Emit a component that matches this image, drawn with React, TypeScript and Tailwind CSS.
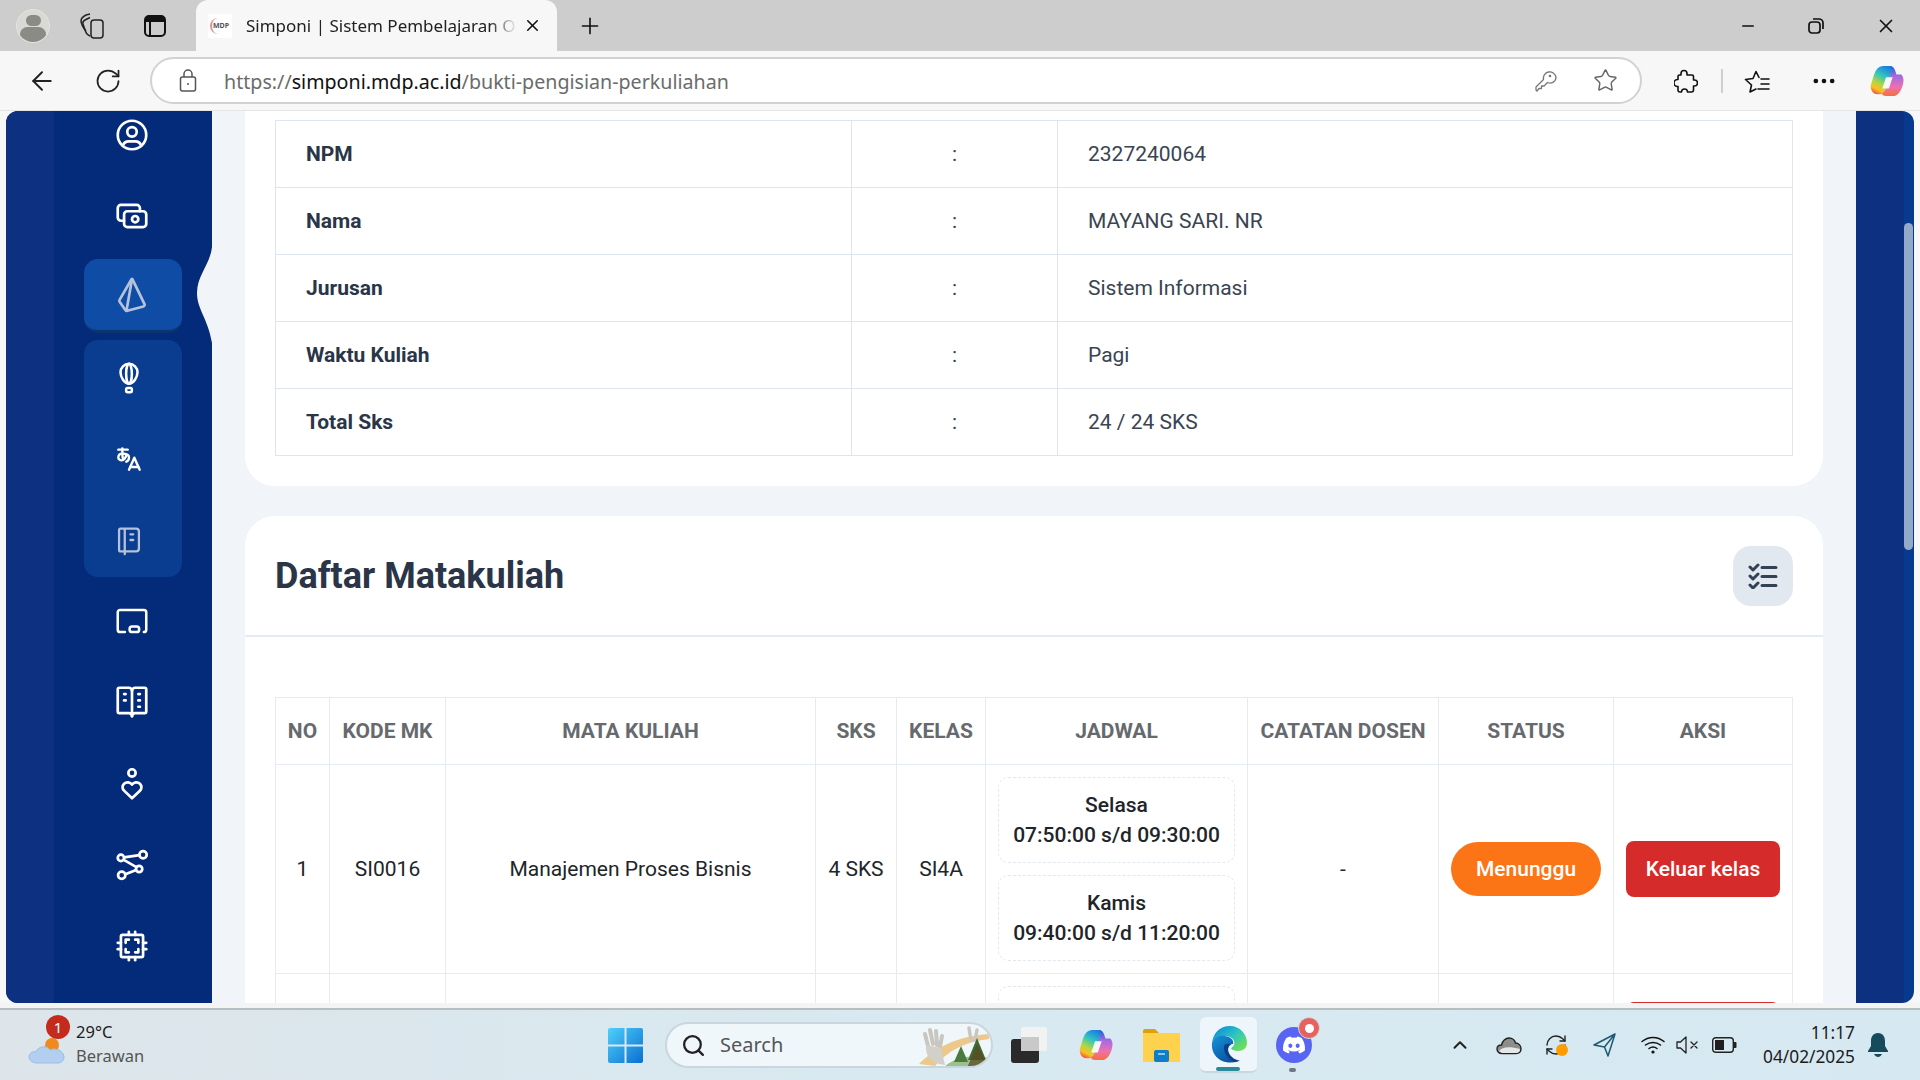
import { ArrowLeft, RotateCw, RefreshCw, Plus, X, Minus, ChevronUp, Search, Star, Ellipsis } from "lucide-react";
import { FaDiscord } from "react-icons/fa";
import {
  TbUserCircle,
  TbCash,
  TbBrandPrisma,
  TbAirBalloon,
  TbLanguageHiragana,
  TbNotebook,
  TbVocabulary,
  TbCpu2,
} from "react-icons/tb";

const biodata = [
  { label: "NPM", value: "2327240064" },
  { label: "Nama", value: "MAYANG SARI. NR" },
  { label: "Jurusan", value: "Sistem Informasi" },
  { label: "Waktu Kuliah", value: "Pagi" },
  { label: "Total Sks", value: "24 / 24 SKS" },
];

const headers = ["NO", "KODE MK", "MATA KULIAH", "SKS", "KELAS", "JADWAL", "CATATAN DOSEN", "STATUS", "AKSI"];

function CopilotLogo({ size, id }: { size: number; id: string }) {
  return (
    <svg width={size} height={size} viewBox="0 0 36 36">
      <defs>
        <linearGradient id={`${id}-a`} x1="0.7" y1="0" x2="0.3" y2="1">
          <stop offset="0" stopColor="#1b7fe0" />
          <stop offset="0.35" stopColor="#30c5c0" />
          <stop offset="0.65" stopColor="#b6d63c" />
          <stop offset="0.85" stopColor="#fbbf24" />
          <stop offset="1" stopColor="#f0603a" />
        </linearGradient>
        <linearGradient id={`${id}-b`} x1="0.5" y1="0" x2="0.5" y2="1">
          <stop offset="0" stopColor="#1560d8" />
          <stop offset="0.35" stopColor="#a66be0" />
          <stop offset="0.7" stopColor="#ee6fb0" />
          <stop offset="1" stopColor="#f4703a" />
        </linearGradient>
      </defs>
      <path d="M14 2 L21 2 C23 2 24 3 23.5 5 L18 25 C17 29 15 32 11 32 L8 32 C3 32 0 27 1 22 L4 12 C6 6 9 2 14 2Z" fill={`url(#${id}-a)`} />
      <path d="M21 2 C24 2 26 4 27 8 L28 11 L33 11 C36 14 36 18 34.5 23 C33 28 30 34 24 34 L17 34 C14 34 12.5 32.5 13 31 C15 30 16.5 28 17.5 25 L22 9 C23 6 23 4 21 2Z" fill={`url(#${id}-b)`} />
      <path d="M17 14 L24 14 L20 26 L13 26Z" fill="#ffffff" opacity="0.92" />
    </svg>
  );
}

function EdgeLogo() {
  return (
    <svg width="38" height="38" viewBox="0 0 38 38">
      <defs>
        <linearGradient id="edge-a" x1="0.2" y1="0" x2="1" y2="0.7">
          <stop offset="0" stopColor="#0c8fd6" />
          <stop offset="0.55" stopColor="#2fc6c0" />
          <stop offset="1" stopColor="#6ade5a" />
        </linearGradient>
        <linearGradient id="edge-b" x1="0" y1="0" x2="0.7" y2="1">
          <stop offset="0" stopColor="#1593d8" />
          <stop offset="1" stopColor="#0b4f9e" />
        </linearGradient>
      </defs>
      <path d="M2 18 C3 8 10 1 20 1 C30 1 37 9 37 18 C37 23 33 26 28 26 C24 26 21 25 21 23 C24 21 25 19 24 16 C22 11 15 10 9 12 C5 13 3 15 2 18Z" fill="url(#edge-a)" />
      <path d="M2 18 C4 12 10 10 15 11 C21 12 24 15 23 19 C19 20 17 24 19 29 C21 33 25 36 29 36 C26 37 23 37.5 20 37.5 C9 37.5 1 29 2 18Z" fill="url(#edge-b)" />
      <path d="M19 29 C17 24 19 20 23 19 C23 21 22 22 21 23 C21 25 24 26 28 26 C31 26 33 27 34 27 C32 32 29 35 26 36 C23 35 20 32 19 29Z" fill="#eef6fb" />
      <path d="M14 21 C13 28 18 34 25 37 C26 37 28 36 30 35.5 C24 35 20 31 18.5 27 C17.5 24 18 21 20 19 C17 18.5 15 19 14 21Z" fill="#0a3f86" />
    </svg>
  );
}

function SearchArt() {
  return (
    <svg width="74" height="44" viewBox="0 0 74 44">
      <path d="M2 40 C18 24 40 12 72 10 L72 15 C46 18 30 28 18 42Z" fill="#ecc98a" />
      <path d="M8 10 L11 22 M13 6 L16 20 M19 7 L20 21 M25 12 L23 23" stroke="#c9c6c0" strokeWidth="4" strokeLinecap="round" />
      <path d="M9 21 C8 32 14 40 28 41 L24 24Z" fill="#d3d0ca" />
      <path d="M52 4 L54 16 M60 6 L58 16" stroke="#c9c6c0" strokeWidth="3.5" strokeLinecap="round" />
      <path d="M26 44 C36 34 52 30 72 34 L68 44Z" fill="#9dc08f" />
      <path d="M60 14 L69 36 L51 36Z" fill="#3f6b35" />
      <path d="M44 22 L51 38 L37 38Z" fill="#4b7a3e" />
      <path d="M60 20 L72 44 L50 44Z" fill="#5a4a20" opacity="0.75" />
    </svg>
  );
}

function Sidebar() {
  const slot = "h-[32px] flex items-center justify-center";
  const icon = "w-[38px] h-[38px] shrink-0 text-white";
  const sub = "h-[81px] shrink-0 flex items-center justify-center pr-[8px]";
  return (
    <aside className="relative w-[206px] ml-[6px] flex rounded-tl-[12px] rounded-bl-[12px] overflow-hidden bg-[#042a7a]">
      <div className="w-[48px] bg-[#0d3080]" />
      <nav className="flex-1 flex flex-col items-center pr-[3px]">
        <div className={`mt-[8px] ${slot}`}><TbUserCircle className={icon} strokeWidth={1.7} /></div>
        <div className={`mt-[49px] ${slot}`}><TbCash className={icon} strokeWidth={1.7} /></div>
        <div className="mt-[27px] ml-[2px] pr-[2px] w-[98px] h-[74px] rounded-[14px] bg-[#0e4ca6] border-b-[3px] border-[#0a3570] flex items-center justify-center">
          <TbBrandPrisma className="w-[38px] h-[38px] text-[#b4c2dc]" strokeWidth={1.7} />
        </div>
        <div className="mt-[7px] ml-[2px] w-[98px] h-[237px] rounded-[14px] bg-[#0a3c8f] flex flex-col overflow-hidden">
          <div className={`${sub} -mt-[3px]`}><TbAirBalloon className="w-[34px] h-[34px] text-white" strokeWidth={1.8} /></div>
          <div className={sub}><TbLanguageHiragana className="w-[32px] h-[32px] text-white" strokeWidth={1.8} /></div>
          <div className={sub}><TbNotebook className="w-[34px] h-[34px] text-[#b4c2dc]" strokeWidth={1.6} /></div>
        </div>
        <div className={`mt-[28px] ${slot}`}>
          <svg className={icon} viewBox="0 0 24 24" fill="none" stroke="currentColor" strokeWidth="1.600" strokeLinecap="round" strokeLinejoin="round">
            <path d="M7.500 19H4.500a1.500 1.500 0 0 1-1.500-1.500V6.500A1.500 1.500 0 0 1 4.500 5h15A1.500 1.500 0 0 1 21 6.500v11a1.500 1.500 0 0 1-1.500 1.500" />
            <rect x="10.500" y="15.500" width="6" height="3.500" rx="1.500" />
          </svg>
        </div>
        <div className={`mt-[49px] ${slot}`}><TbVocabulary className={icon} strokeWidth={1.7} /></div>
        <div className={`mt-[50px] ${slot}`}>
          <svg className={icon} viewBox="0 0 24 24" fill="none" stroke="currentColor" strokeWidth="1.700" strokeLinecap="round" strokeLinejoin="round">
            <circle cx="12" cy="5" r="2.300" />
            <path d="M12 21 L7 16.200 a3 3 0 0 1 0-4.400 a3.300 3.300 0 0 1 5 .6 a3.300 3.300 0 0 1 5-.6 a3 3 0 0 1 0 4.400Z" />
          </svg>
        </div>
        <div className={`mt-[49px] ${slot}`}>
          <svg className={icon} viewBox="0 0 24 24" fill="none" stroke="currentColor" strokeWidth="1.700" strokeLinecap="round" strokeLinejoin="round">
            <circle cx="5" cy="7.500" r="2" />
            <circle cx="19" cy="5.500" r="2.300" />
            <circle cx="5.500" cy="18.500" r="2.300" />
            <circle cx="16.500" cy="14.500" r="2" />
            <path d="M6.800 8.800 L14.800 13.300 M7.800 17.800 L14.600 15.200 M7 7.200 L16.700 5.800" />
          </svg>
        </div>
        <div className={`mt-[49px] ${slot}`}><TbCpu2 className={icon} strokeWidth={1.7} /></div>
      </nav>
      <svg className="absolute right-0 top-[136px]" width="15" height="96" viewBox="0 0 15 96">
        <path d="M15 0 C13 18 0 28 0 46 C0 62 11 72 15 96 Z" fill="#f1f5f9" />
      </svg>
    </aside>
  );
}

function Biodata() {
  return (
    <section className="bg-white rounded-b-[30px] px-[30px] pt-[9px] pb-[30px]">
      <table className="w-full table-fixed border-collapse text-[21px]">
        <colgroup>
          <col className="w-[576px]" />
          <col className="w-[206px]" />
          <col />
        </colgroup>
        <tbody>
          {biodata.map((row) => (
            <tr key={row.label} className="h-[67px]">
              <td className="border border-[#dfe5ef] pl-[30px] pt-[2px] font-bold text-[#2a3547]">{row.label}</td>
              <td className="border border-[#dfe5ef] pt-[2px] text-center text-[#3a4452]">:</td>
              <td className="border border-[#dfe5ef] pl-[30px] pt-[2px] text-[#3a4452]">{row.value}</td>
            </tr>
          ))}
        </tbody>
      </table>
    </section>
  );
}

function Schedule({ day, time }: { day: string; time: string }) {
  return (
    <div className="h-[86px] rounded-[10px] border border-dashed border-[#e2e8f0] flex flex-col items-center justify-center text-[21px] leading-[30px] font-medium text-[#212529]">
      <div>{day}</div>
      <div>{time}</div>
    </div>
  );
}

function CourseList() {
  const cell = "border border-[#e6ebf3] text-center";
  const textCell = "border border-[#e6ebf3] text-center pt-[2px]";
  return (
    <section className="mt-[30px] bg-white rounded-t-[30px]">
      <div className="h-[121px] flex items-center justify-between px-[30px] border-b-2 border-[#e6ebf3]">
        <h2 className="text-[36px] font-bold text-[#2a3547]">Daftar Matakuliah</h2>
        <button className="w-[60px] h-[60px] rounded-[18px] bg-[#e2e8f0] flex items-center justify-center">
          <svg width="30" height="26" viewBox="0 0 30 26" fill="none" stroke="#334155" strokeLinecap="round" strokeLinejoin="round">
            <path d="M2 4l3 3 5-5M2 13l3 3 5-5M2 22l3 3 5-5" strokeWidth="3" />
            <path d="M14 4.500h14M14 13.500h14M14 22.500h14" strokeWidth="3" />
          </svg>
        </button>
      </div>
      <div className="px-[30px] pt-[60px]">
        <table className="w-full table-fixed border-collapse text-[21px] text-[#212529]">
          <colgroup>
            <col className="w-[54px]" />
            <col className="w-[116px]" />
            <col className="w-[370px]" />
            <col className="w-[81px]" />
            <col className="w-[89px]" />
            <col className="w-[262px]" />
            <col className="w-[191px]" />
            <col className="w-[175px]" />
            <col />
          </colgroup>
          <thead>
            <tr className="h-[67px]">
              {headers.map((h) => (
                <th key={h} className={`${textCell} font-bold text-[#666a6e]`}>{h}</th>
              ))}
            </tr>
          </thead>
          <tbody>
            <tr className="h-[209px]">
              <td className={textCell}>1</td>
              <td className={textCell}>SI0016</td>
              <td className={textCell}>Manajemen Proses Bisnis</td>
              <td className={textCell}>4 SKS</td>
              <td className={textCell}>SI4A</td>
              <td className={`${cell} px-[12px]`}>
                <div className="flex flex-col gap-[12px]">
                  <Schedule day="Selasa" time="07:50:00 s/d 09:30:00" />
                  <Schedule day="Kamis" time="09:40:00 s/d 11:20:00" />
                </div>
              </td>
              <td className={textCell}>-</td>
              <td className={cell}>
                <span className="inline-flex w-[150px] h-[54px] pt-[2px] items-center justify-center rounded-full bg-[#fb7517] text-white font-medium">Menunggu</span>
              </td>
              <td className={cell}>
                <button className="w-[154px] h-[56px] pt-[2px] rounded-[8px] bg-[#d62b2b] text-white font-medium">Keluar kelas</button>
              </td>
            </tr>
            <tr className="h-[208px] align-top">
              <td className={cell} />
              <td className={cell} />
              <td className={cell} />
              <td className={cell} />
              <td className={cell} />
              <td className={`${cell} px-[12px] pt-[12px]`}>
                <div className="h-[86px] rounded-[10px] border border-dashed border-[#e2e8f0]" />
              </td>
              <td className={cell} />
              <td className={cell} />
              <td className={cell}>
                <div className="mt-[28px] mx-auto w-[154px] h-[56px] rounded-[8px] bg-[#d62b2b]" />
              </td>
            </tr>
          </tbody>
        </table>
      </div>
    </section>
  );
}

function Taskbar() {
  return (
    <footer className="h-[70px] flex items-center bg-gradient-to-r from-[#dde5ea] via-[#d8e9f1] to-[#d6e8f1] text-[#1c1c1c]" style={{ fontFamily: '"Noto Sans", sans-serif' }}>
      <div className="relative ml-[28px] w-[38px] h-[44px]">
        <svg className="absolute left-0 bottom-[2px]" width="38" height="28" viewBox="0 0 38 28">
          <circle cx="24" cy="8" r="7" fill="#f08a1d" />
          <path d="M9 26 C3 26 1 22 1 20 C1 16 5 14 8 15 C10 9 19 8 22 13 C27 10 36 14 36 20 C36 24 33 26 30 26Z" fill="#b3cff0" stroke="#9bbce6" />
        </svg>
        <div className="absolute left-[18px] top-[-8px] w-[24px] h-[24px] rounded-full bg-[#c42b1c] text-white text-[15px] leading-[24px] text-center">1</div>
      </div>
      <div className="ml-[10px] -mt-[2px] w-[90px] leading-[24px] text-[16.500px]">
        <div>29°C</div>
        <div className="text-[#555]">Berawan</div>
      </div>
      <svg className="ml-[442px]" width="35" height="35" viewBox="0 0 35 35">
        <defs>
          <linearGradient id="win" x1="0" y1="0" x2="1" y2="1">
            <stop offset="0" stopColor="#4fd0fb" />
            <stop offset="1" stopColor="#0a6fd0" />
          </linearGradient>
        </defs>
        <path d="M0 2a2 2 0 0 1 2-2h14.500v16.500H0zM18.500 0H33a2 2 0 0 1 2 2v14.500H18.500zM0 18.500h16.500V35H2a2 2 0 0 1-2-2zM18.500 18.500H35V33a2 2 0 0 1-2 2H18.500z" fill="url(#win)" />
      </svg>
      <div className="relative ml-[22px] w-[328px] h-[46px] rounded-full bg-[#f0f7fb] border-2 border-[#c9d6dd] flex items-center overflow-hidden">
        <Search className="ml-[14px] w-[25px] h-[25px] text-[#222]" strokeWidth={2.2} />
        <span className="ml-[14px] text-[20px] text-[#555]">Search</span>
        <div className="absolute right-0 top-0"><SearchArt /></div>
      </div>
      <div className="relative ml-[18px] w-[36px] h-[36px]">
        <div className="absolute left-[10px] top-0 w-[26px] h-[24px] rounded-[2px] bg-[#f2f2f2]" />
        <div className="absolute left-0 bottom-0 w-[28px] h-[24px] rounded-[3px] bg-[#2a2a2a]" />
        <div className="absolute left-[10px] top-[10px] w-[18px] h-[14px] bg-[#c9c9c9]" />
      </div>
      <div className="ml-[32px]"><CopilotLogo size={34} id="task-copilot" /></div>
      <svg className="ml-[30px]" width="37" height="34" viewBox="0 0 37 34">
        <path d="M0 3a2 2 0 0 1 2-2h10l4 4h-16z" fill="#e0a00e" />
        <path d="M0 5h37v29H0z" fill="#ffd24d" />
        <rect x="11" y="22" width="15" height="12" rx="2" fill="#0f7dc7" />
        <path d="M15 26h7" stroke="#8cc7ee" strokeWidth="2" />
      </svg>
      <div className="relative ml-[20px] w-[57px] h-[56px] rounded-[6px] bg-[#eef6fb] border-b-2 border-[#c9d8e0] flex items-center justify-center">
        <EdgeLogo />
        <div className="absolute left-[16px] bottom-[0px] w-[24px] h-[4px] rounded-full bg-[#2a8a9a]" />
      </div>
      <div className="relative ml-[19px] w-[36px] h-[36px] rounded-full bg-[#5865f2] flex items-center justify-center">
        <FaDiscord className="w-[24px] h-[24px] text-white" />
        <div className="absolute right-[-8px] top-[-10px] w-[22px] h-[22px] rounded-full bg-[#e9605c] border-[1px] border-[#c9d8e0] flex items-center justify-center">
          <div className="w-[9px] h-[9px] rounded-full bg-white" />
        </div>
        <div className="absolute left-[13px] bottom-[-9px] w-[7px] h-[4px] rounded-full bg-[#6e7a80]" />
      </div>
      <ChevronUp className="ml-[137px] w-[22px] h-[22px] text-[#222]" strokeWidth={2.2} />
      <svg className="ml-[25px]" width="26" height="20" viewBox="0 0 26 20">
        <path d="M6 18.500C3 18.500 1 16.500 1 14C1 11.500 3 10 5.500 10C6.500 5.500 10 3 13 3C16.500 3 19 5.500 19.500 8C22.500 8 25 10.500 25 13.500C25 16.500 23 18.500 20 18.500Z" fill="#8d8d8d" stroke="#222" strokeWidth="1.4" />
        <path d="M3 16C6 12 13 11 24 14C24 17 22 18 20 18H6Z" fill="#e7e7e7" />
      </svg>
      <div className="relative ml-[22px] w-[24px] h-[24px]">
        <RefreshCw className="w-[24px] h-[24px] text-[#222]" strokeWidth={1.4} />
        <div className="absolute left-[12px] top-[11px] w-[12px] h-[12px] rounded-full bg-[#ff9d00]" />
      </div>
      <svg className="ml-[25px]" width="24" height="24" viewBox="0 0 24 24" fill="none" stroke="#1d5a72" strokeWidth="1.5" strokeLinejoin="round">
        <path d="M22 1 L1 12 L11.500 14 L15 23Z M11.500 14 L22 1" />
      </svg>
      <svg className="ml-[24px]" width="24" height="20" viewBox="0 0 24 20" fill="none" stroke="#111" strokeWidth="1.5" strokeLinecap="round">
        <path d="M1 6.500C7.500 1 16.500 1 23 6.500M4.500 10C9 6.500 15 6.500 19.500 10M8 13.500C10.500 11.500 13.500 11.500 16 13.500" />
        <circle cx="12" cy="17" r="1.6" fill="#111" stroke="none" />
      </svg>
      <svg className="ml-[11px]" width="24" height="20" viewBox="0 0 24 20" fill="none" stroke="#222" strokeWidth="1.3" strokeLinejoin="round" strokeLinecap="round">
        <path d="M1 7h3.500L10 2v16l-5.500-5H1z M15 7l6 6M21 7l-6 6" />
      </svg>
      <svg className="ml-[12px]" width="25" height="16" viewBox="0 0 25 16">
        <rect x="0.700" y="0.700" width="20.600" height="14.600" rx="3" fill="none" stroke="#222" strokeWidth="1.4" />
        <rect x="3" y="3" width="9" height="10" fill="#1f1f1f" />
        <path d="M22 5h1.500a1 1 0 0 1 1 1v4a1 1 0 0 1-1 1H22z" fill="#222" />
      </svg>
      <div className="ml-auto mr-[13px] text-right leading-[24px] text-[17.300px]">
        <div>11:17</div>
        <div>04/02/2025</div>
      </div>
      <svg className="mr-[32px]" width="20" height="24" viewBox="0 0 20 24" fill="#164b5e">
        <path d="M10 0C5 0 3 4 3 8V13L0 18V19H20V18L17 13V8C17 4 15 0 10 0Z" />
        <path d="M6 21H14C13 23 11.500 24 10 24C8.500 24 7 23 6 21Z" />
      </svg>
    </footer>
  );
}

export default function App() {
  return (
    <div className="w-[1920px] h-[1080px] overflow-hidden flex flex-col bg-[#f7f7f7]" style={{ fontFamily: "Roboto, sans-serif" }}>
      {/* tab strip */}
      <header className="h-[51px] shrink-0 bg-[#cdcdcd] flex items-center text-[#1c1c1c]" style={{ fontFamily: '"Noto Sans", sans-serif' }}>
        <div className="ml-[16px] w-[34px] h-[34px] rounded-full bg-[#d9d9d6] border border-[#e4e4e0] overflow-hidden flex flex-col items-center">
          <div className="mt-[5px] w-[15px] h-[16px] rounded-full bg-[#8b8b86]" />
          <div className="mt-[1px] w-[26px] h-[20px] rounded-full bg-[#8b8b86]" />
        </div>
        <svg className="ml-[30px]" width="24" height="26" viewBox="0 0 24 26" fill="none" stroke="#222" strokeWidth="1.5" strokeLinejoin="round">
          <rect x="11" y="7" width="12" height="18" rx="3" />
          <path d="M10 23C7 22 6 20 5 17L3 11C2.500 9 3 8 5 7L10 4.500" />
          <path d="M6 18C3 15 1 10 1 8C1 5 4 3 6 2L10 1" />
        </svg>
        <svg className="ml-[40px]" width="22" height="22" viewBox="0 0 22 22" fill="none">
          <rect x="1" y="1" width="20" height="20" rx="4" stroke="#111" strokeWidth="2" />
          <path d="M1 5a4 4 0 0 1 4-4h12a4 4 0 0 1 4 4v2H1z" fill="#111" />
          <path d="M6 7v14" stroke="#111" strokeWidth="2" />
        </svg>
        <div className="ml-[30px] w-[361px] h-[51px] rounded-t-[12px] bg-[#f7f7f7] flex items-center">
          <div className="ml-[12px] w-[24px] h-[24px] bg-white flex items-center justify-center">
            <div className="w-[20px] h-[16px] rounded-full border-l-2 border-[#e58f8f] text-[7px] leading-[16px] font-bold text-[#555] text-center">MDP</div>
          </div>
          <div className="ml-[14px] w-[277px] whitespace-nowrap text-[17px] text-[#222]" style={{ maskImage: "linear-gradient(to right, black 88%, transparent 98%)" }}>
            Simponi | Sistem Pembelajaran Or
          </div>
          <X className="w-[19px] h-[19px] text-[#111]" strokeWidth={2} />
        </div>
        <Plus className="ml-[20px] w-[26px] h-[26px] text-[#111]" strokeWidth={1.5} />
        <Minus className="ml-[1136px] w-[18px] h-[18px] text-[#111]" strokeWidth={2} />
        <svg className="ml-[51px]" width="16" height="16" viewBox="0 0 16 16" fill="none" stroke="#111" strokeWidth="1.700">
          <rect x="1" y="4" width="11" height="11" rx="3" />
          <path d="M5 1h6a4 4 0 0 1 4 4v6" />
        </svg>
        <X className="ml-[51px] w-[22px] h-[22px] text-[#111]" strokeWidth={1.8} />
      </header>

      {/* toolbar */}
      <div className="h-[60px] shrink-0 bg-[#f7f7f7] border-b border-[#e5e5e5] flex items-center" style={{ fontFamily: '"Noto Sans", sans-serif' }}>
        <ArrowLeft className="ml-[27px] w-[30px] h-[30px] text-[#222]" strokeWidth={1.5} />
        <RotateCw className="ml-[37px] w-[28px] h-[28px] text-[#222]" strokeWidth={1.5} />
        <div className="ml-[28px] w-[1492px] h-[47px] rounded-full bg-white border-2 border-[#d2d2d2] flex items-center">
          <svg className="ml-[27px]" width="18" height="24" viewBox="0 0 18 24" fill="none" stroke="#555" strokeWidth="1.500">
            <rect x="1.500" y="8" width="15" height="14" rx="2" />
            <path d="M5 8V5a4 4 0 0 1 8 0v3" />
            <circle cx="9" cy="15" r="1" fill="#555" stroke="none" />
          </svg>
          <div className="ml-[27px] mt-[2px] text-[19.650px] text-[#6b6b6b] whitespace-nowrap">
            https://<span className="text-[#111]">simponi.mdp.ac.id</span>/bukti-pengisian-perkuliahan
          </div>
          <svg className="ml-auto" width="22" height="22" viewBox="0 0 22 22" fill="none" stroke="#777" strokeWidth="1.300" strokeLinejoin="round">
            <path d="M21 7a6 6 0 0 1-8.500 5.500L9 16H6.500v2.500H4L2 21l-1-1v-3l7.500-7.500A6 6 0 1 1 21 7Z" />
            <circle cx="15" cy="6" r="1.300" fill="#777" stroke="none" />
          </svg>
          <Star className="ml-[36px] mr-[22px] w-[25px] h-[25px] text-[#666]" strokeWidth={1.4} />
        </div>
        <svg className="ml-[32px]" width="24" height="24" viewBox="0 0 24 24" fill="none" stroke="#111" strokeWidth="1.600" strokeLinejoin="round">
          <path d="M10 1.500a3 3 0 0 1 3 3V6h5a1.500 1.500 0 0 1 1.500 1.500V11h1a3 3 0 1 1 0 6h-1v4a2 2 0 0 1-2 2h-4a3 3 0 0 0-6 0H6a2 2 0 0 1-2-2v-3.500H3.500a3.500 3.500 0 0 1 0-7H4V7.500A1.500 1.500 0 0 1 5.500 6H7V4.500a3 3 0 0 1 3-3Z" />
        </svg>
        <div className="ml-[23px] w-[2px] h-[24px] bg-[#cfcfcf]" />
        <svg className="ml-[21px]" width="26" height="24" viewBox="0 0 26 24" fill="none" stroke="#111" strokeWidth="1.600" strokeLinejoin="round" strokeLinecap="round">
          <path d="M12 20L6 23L7.500 16L1.500 10.500L9 9.500L12 2.500L15 8.500M17 10H25M17 15H25M14 20H25" />
        </svg>
        <Ellipsis className="ml-[40px] w-[28px] h-[28px] text-[#111]" strokeWidth={2} />
        <div className="ml-[32px]"><CopilotLogo size={34} id="bar-copilot" /></div>
      </div>

      {/* page */}
      <main className="h-[892px] shrink-0 flex overflow-hidden">
        <Sidebar />
        <div className="flex-1 bg-[#f1f5f9] px-[33px] overflow-hidden">
          <Biodata />
          <CourseList />
        </div>
        <div className="w-[58px] mr-[6px] flex rounded-tr-[12px] rounded-br-[12px] overflow-hidden">
          <div className="w-[48px] bg-[#0d3080]" />
          <div className="flex-1 bg-[#07398f]">
            <div className="mt-[112px] w-[9px] h-[327px] rounded-full bg-[#93a9c9]" />
          </div>
        </div>
      </main>

      <div className="h-[5px] shrink-0 bg-[#f4f4f4]" />
      <div className="h-[2px] shrink-0 bg-[#b7bec2]" />
      <Taskbar />
    </div>
  );
}
